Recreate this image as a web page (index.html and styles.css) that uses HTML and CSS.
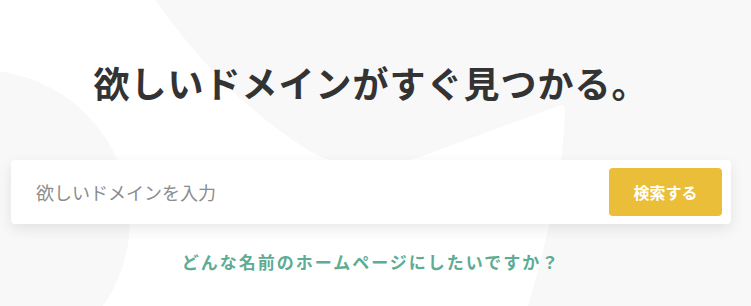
FILE: index.html
```html
<!DOCTYPE html>
<html lang="ja">
  <head>
    <title>ドメイン検索</title>
    <meta charset="utf-8">
    <meta name="viewport" content="width=device-width, initial-scale=1">
    <link rel="stylesheet" href="styles.css">
  </head>
  <body>
    <div class="hero">
      <!-- background shapes -->
      <svg class="hero-bg" width="751" height="306" viewBox="0 0 751 306" aria-hidden="true">
        <path d="M0 0 L155 0 C185 40 225 95 300 145 C335 170 375 170 420 157 L558 106 Q566 103 565 112 C563 170 550 230 528 306 L0 306 Z" fill="#ffffff" />
        <circle cx="-20" cy="220" r="150" fill="#f8f8f8" />
      </svg>
      <div class="container">
        <h1>欲しいドメインがすぐ見つかる。</h1>
        <form class="search" name="form-search">
          <input type="text" id="domain" placeholder="欲しいドメインを入力">
          <button type="submit" class="search-btn">検索する</button>
        </form>
        <p class="question">どんな名前のホームページにしたいですか？</p>
      </div>
    </div>
  </body>
</html>
```

FILE: styles.css
```css
body {
  background: #f8f8f8;
  color: #333;
  font-family: "Noto Sans CJK JP", "Noto Sans", sans-serif;
  margin: 0;
}

.hero {
  position: relative;
  height: 306px;
  overflow: hidden;
}

.hero-bg {
  position: absolute;
  top: 0;
  left: 0;
}

.container {
  position: relative;
  width: 720px;
  margin-left: 11px;
  padding-top: 55px;
  text-align: center;
}

h1 {
  margin: 0;
  font-size: 36px;
  line-height: 54px;
  font-weight: bold;
  letter-spacing: 1px;
  color: #333;
}

.search {
  display: flex;
  align-items: center;
  margin-top: 51px;
  padding: 8px 9px 8px 25px;
  background: #fff;
  border-radius: 4px;
  box-shadow: 0 5px 14px rgba(0, 0, 0, 0.09);
}

.search input[type="text"] {
  flex: 1;
  border: 0;
  outline: none;
  background: transparent;
  padding: 0;
  font-family: inherit;
  font-size: 18px;
  color: #333;
}

.search input::placeholder {
  color: #8c8c8c;
}

.search-btn {
  width: 113px;
  height: 48px;
  border: 0;
  border-radius: 4px;
  background: #eabe38;
  color: #fff;
  font-family: inherit;
  font-size: 16px;
  font-weight: bold;
  cursor: pointer;
}

.question {
  margin: 26px 0 0;
  font-size: 17px;
  line-height: 24px;
  font-weight: bold;
  letter-spacing: 2px;
  color: #5dac93;
}
```
